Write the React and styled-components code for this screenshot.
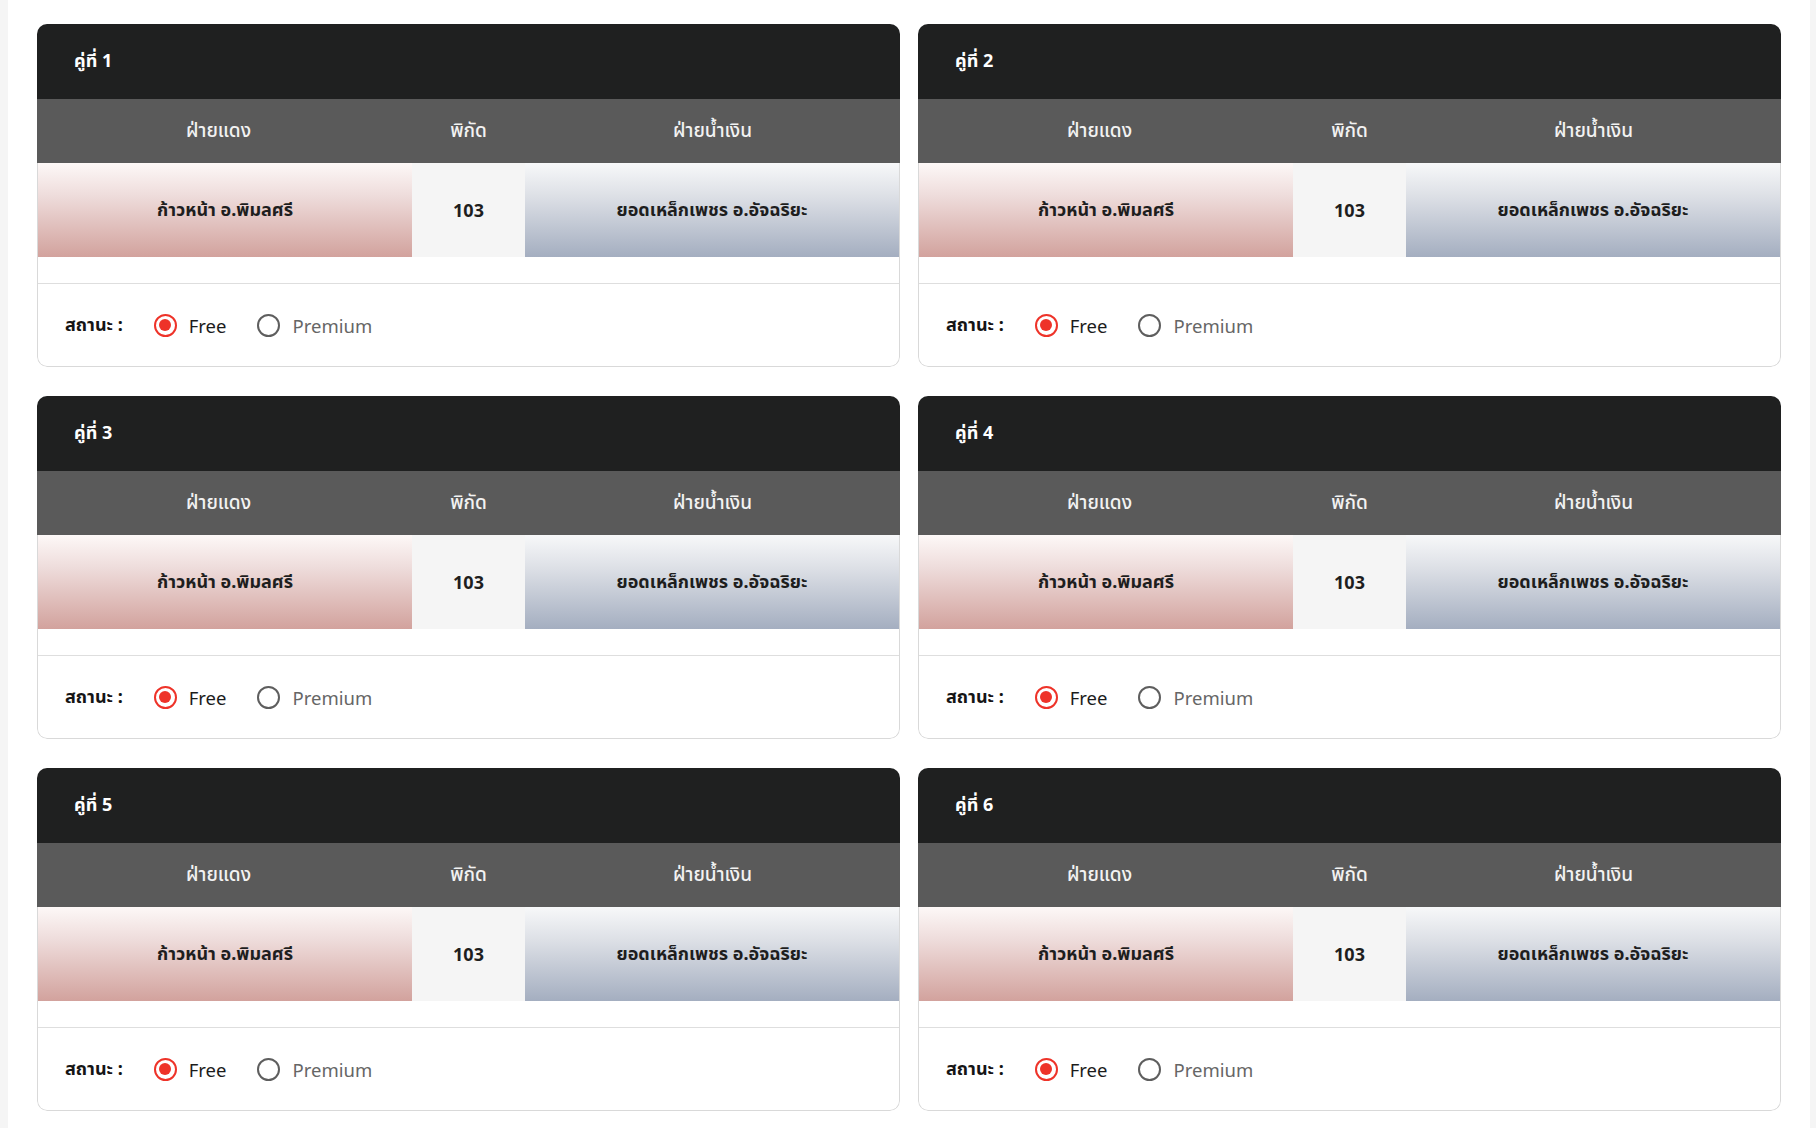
import React from 'react';
import styled, { createGlobalStyle } from 'styled-components';

const GlobalStyle = createGlobalStyle`
    html, body {
        margin: 0;
        padding: 0;
        background: #f5f5f5;
    }
    body {
        font-family: "Noto Sans", "Noto Sans Thai", "Open Sans", sans-serif;
    }
`

const Page = styled.main`
    margin: 0 6px 0 8px;
    min-height: 1128px;
    background: #ffffff;
    padding: 24px 29px;
    box-sizing: border-box;
    display: grid;
    grid-template-columns: 1fr 1fr;
    column-gap: 18px;
    row-gap: 29px;
    align-content: start;
`

const Card = styled.section`
    border-radius: 10px;
    overflow: hidden;
    display: flex;
    flex-direction: column;
`

const Title = styled.div`
    height: 75px;
    display: flex;
    align-items: center;
    padding-left: 37px;
    background: #1f2020;
    color: #ffffff;
    font-size: 18px;
    font-weight: 700;
`

const Row = styled.div`
    display: grid;
    grid-template-columns: 1fr 113px 1fr;
    height: ${props => props.height}px;
`

const HeadCell = styled.div`
    display: flex;
    align-items: center;
    justify-content: center;
    padding-right: ${props => props.shift || 0}px;
    background: #5a5a5a;
    color: #f2f2f2;
    font-size: 19px;
    font-weight: 500;
`

const sideBg = {
    red: 'linear-gradient(180deg, #fdf8f7 0%, #eedcdb 35%, #d2a29d 100%)',
    blue: 'linear-gradient(180deg, #f7f8f9 0%, #dde0e6 35%, #a4aec0 100%)',
    mid: '#f5f5f5',
}

const DataCell = styled.div`
    display: flex;
    align-items: center;
    justify-content: center;
    background: ${props => sideBg[props.side]};
    color: #1e1e1e;
    font-size: 18px;
    font-weight: 700;
`

const Body = styled.div`
    border: 1px solid #d9d9d9;
    border-top: none;
    border-radius: 0 0 10px 10px;
    background: #ffffff;
`

const Spacer = styled.div`
    height: 26px;
    border-bottom: 1px solid #dedede;
`

const Footer = styled.div`
    height: 82px;
    display: flex;
    align-items: center;
    padding-left: 27px;
    font-size: 18.5px;
`

const StatusLabel = styled.span`
    font-weight: 700;
    font-size: 18px;
    color: #151515;
    margin-right: 31px;
`

const Option = styled.label`
    display: flex;
    align-items: center;
    gap: 12px;
    margin-right: 31px;
    color: ${props => props.checked ? '#1c1c1c' : '#666666'};
`

const Dot = styled.span`
    width: 23px;
    height: 23px;
    box-sizing: border-box;
    border-radius: 50%;
    border: 2px solid ${props => props.checked ? '#ee3329' : '#5e5e5e'};
    display: flex;
    align-items: center;
    justify-content: center;

    &::after {
        content: '';
        width: 12px;
        height: 12px;
        border-radius: 50%;
        background: ${props => props.checked ? '#ee3329' : 'transparent'};
    }
`

const pairs = [1, 2, 3, 4, 5, 6]

function MatchCard({ no }) {
  return (
    <Card>
        <Title>คู่ที่ {no}</Title>
        <Row height={64}>
            <HeadCell shift={12}>ฝ่ายแดง</HeadCell>
            <HeadCell>พิกัด</HeadCell>
            <HeadCell>ฝ่ายน้ำเงิน</HeadCell>
        </Row>
        <Body>
            <Row height={94}>
                <DataCell side="red">ก้าวหน้า อ.พิมลศรี</DataCell>
                <DataCell side="mid">103</DataCell>
                <DataCell side="blue">ยอดเหล็กเพชร อ.อัจฉริยะ</DataCell>
            </Row>
            <Spacer />
            <Footer>
                <StatusLabel>สถานะ :</StatusLabel>
                <Option checked>
                    <Dot checked />
                    Free
                </Option>
                <Option>
                    <Dot />
                    Premium
                </Option>
            </Footer>
        </Body>
    </Card>
  )
}

function App() {
  return (
    <>
        <GlobalStyle />
        <Page>
            {pairs.map(no => <MatchCard key={no} no={no} />)}
        </Page>
    </>
  )
}

export default App;
